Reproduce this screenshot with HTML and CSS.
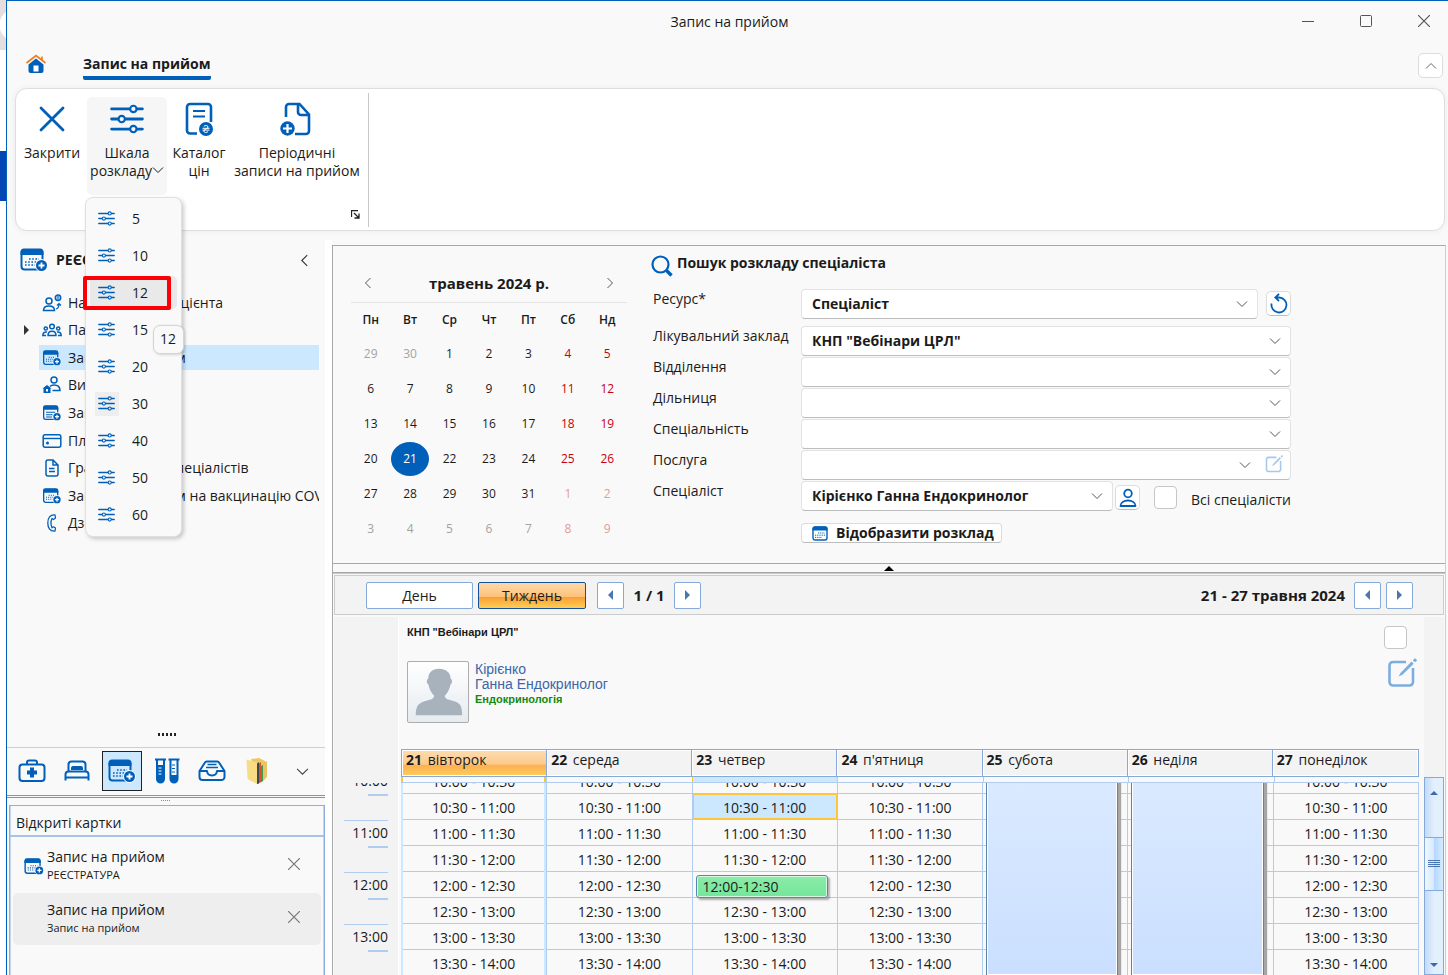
FILE: index.html
```html
<!DOCTYPE html>
<html lang="uk">
  <head>
    <meta charset="UTF-8" />
    <meta name="viewport" content="width=device-width, initial-scale=1.0" />
    <title>Запис на прийом</title>
    <link rel="stylesheet" href="styles.css">
  </head>
  <body>
    <!-- icons -->
    <svg class="icon-defs" aria-hidden="true">
      <symbol id="i-sliders" viewBox="0 0 32 32">
        <g fill="none" stroke="currentColor" stroke-width="2.6" stroke-linecap="round">
          <path d="M1.5 6.5h17M25.500 6.500h5M1.500 16h6M14.500 16h16M1.500 25.500h17M25.500 25.500h5" />
          <circle cx="22" cy="6.500" r="3" stroke-width="2" />
          <circle cx="11" cy="16" r="3" stroke-width="2" />
          <circle cx="22" cy="25.500" r="3" stroke-width="2" />
        </g>
      </symbol>
      <symbol id="i-down" viewBox="0 0 12 12">
        <path d="M1 3.500l5 5 5-5" fill="none" stroke="currentColor" />
      </symbol>
      <symbol id="i-up" viewBox="0 0 12 12">
        <path d="M1 8.500l5-5 5 5" fill="none" stroke="currentColor" />
      </symbol>
      <symbol id="i-left" viewBox="0 0 12 12">
        <path d="M8.500 1l-5 5 5 5" fill="none" stroke="currentColor" />
      </symbol>
      <symbol id="i-right" viewBox="0 0 12 12">
        <path d="M3.500 1l5 5-5 5" fill="none" stroke="currentColor" />
      </symbol>
      <symbol id="i-x" viewBox="0 0 12 12">
        <path d="M0 0l12 12M12 0l-12 12" fill="none" stroke="currentColor" stroke-width="1.200" />
      </symbol>
      <symbol id="i-calendar" viewBox="0 0 28 24">
        <rect x="1.500" y="2" width="21" height="19.500" rx="3" fill="none" stroke="currentColor" stroke-width="2" />
        <path d="M.5 7V4a3.500 3.500 0 0 1 3.500-3.500h16A3.500 3.500 0 0 1 23.500 4v3z" fill="currentColor" />
        <path d="M9 11h10M5 14h14M5 17h10" stroke="currentColor" stroke-width="1.600" stroke-dasharray="1.600 1.600" />
        <circle cx="21.500" cy="17.500" r="6.500" fill="#f9f9f9" />
        <circle cx="21.500" cy="17.500" r="5.500" fill="currentColor" />
        <path d="M18.500 17.500h6M21.500 14.500v6" stroke="#fff" stroke-width="1.800" />
      </symbol>
      <symbol id="i-list" viewBox="0 0 28 24">
        <rect x="1.500" y="2" width="21" height="19.500" rx="3" fill="none" stroke="currentColor" stroke-width="2" />
        <path d="M.5 7V4a3.500 3.500 0 0 1 3.500-3.500h16A3.500 3.500 0 0 1 23.500 4v3z" fill="currentColor" />
        <path d="M5 11h14M5 14.500h10M5 18h9" stroke="currentColor" stroke-width="1.600" />
        <circle cx="21.500" cy="17.500" r="6.500" fill="#f9f9f9" />
        <circle cx="21.500" cy="17.500" r="5.500" fill="currentColor" />
        <path d="M18.500 17.500h6M21.500 14.500v6" stroke="#fff" stroke-width="1.800" />
      </symbol>
      <symbol id="i-calendar-small" viewBox="0 0 16 15">
        <rect x="1" y="1" width="14" height="13" rx="2" fill="none" stroke="currentColor" stroke-width="1.400" />
        <path d="M.5 4.500V2.500a2 2 0 0 1 2-2h11a2 2 0 0 1 2 2v2z" fill="currentColor" />
        <path d="M6 7h7M3 9.200h10M3 11.400h7" stroke="currentColor" stroke-dasharray="1.200 1" />
      </symbol>
      <symbol id="i-referral" viewBox="0 0 20 18">
        <g fill="none" stroke="currentColor" stroke-width="1.500">
          <circle cx="7" cy="7" r="3" />
          <path d="M1.500 16.500c0-3 2.500-4.500 5.500-4.500s5.500 1.500 5.500 4.500z" />
          <path d="M14 15c2.500-.5 3-2 3-5M15 11.500L17 9.500l2 2" stroke-width="1.200" />
          <circle cx="16" cy="3.800" r="2.800" stroke-width="1.300" />
          <path d="M13.500 3h5M13.500 5h5M16 1.500v5" stroke-width=".7" />
        </g>
      </symbol>
      <symbol id="i-group" viewBox="0 0 20 14">
        <g fill="none" stroke="currentColor" stroke-width="1.500">
          <circle cx="10" cy="3.500" r="2.300" />
          <path d="M6 12.500c0-3 1.500-4.200 4-4.200s4 1.200 4 4.200z" />
          <circle cx="3.800" cy="5.500" r="1.600" />
          <circle cx="16.200" cy="5.500" r="1.600" />
          <path d="M5 9C2.500 8.500.8 10 .8 12.500H4M15 9c2.500-.5 4.200 1 4.200 3.500H16" />
        </g>
      </symbol>
      <symbol id="i-homecall" viewBox="0 0 20 18">
        <g fill="none" stroke="currentColor" stroke-width="1.500">
          <circle cx="12" cy="4" r="3" />
          <path d="M8 10.500c1-1.200 2.500-1.500 4-1.500 3.500 0 6 1.500 6 5.500H10.500" />
        </g>
        <path d="M.5 12.500L5 9l4.500 3.500H8.500V17h-7v-4.500z" fill="currentColor" />
        <rect x="4" y="13" width="2" height="2.500" fill="#fff" />
      </symbol>
      <symbol id="i-card" viewBox="0 0 20 16">
        <rect x="1.200" y="1.700" width="17.600" height="12.600" rx="2" fill="none" stroke="currentColor" stroke-width="1.500" />
        <path d="M1 5.500h18" stroke="currentColor" stroke-width="1.400" />
        <circle cx="5.500" cy="10" r="1.500" fill="currentColor" />
      </symbol>
      <symbol id="i-doc" viewBox="0 0 16 18">
        <path d="M2 3a2 2 0 0 1 2-2h5l5 5v9a2 2 0 0 1-2 2H4a2 2 0 0 1-2-2zM9 1v5h5M5 9.500h5.500M5 12.500h6" fill="none" stroke="currentColor" stroke-width="1.500" />
      </symbol>
      <symbol id="i-phone" viewBox="0 0 12 18">
        <path d="M9 1C4 .5 1.800 4 1.800 9S4 17.500 9 17l.5-3-2-1.200-1.500 1C4.800 11 4.800 7 6 4.500l1.500 1L9.500 4z" fill="none" stroke="currentColor" stroke-width="1.300" stroke-linejoin="round" />
      </symbol>
      <symbol id="i-edit" viewBox="0 0 30 30">
        <path d="M19 4H6a3.500 3.500 0 0 0-3.500 3.500V24A3.500 3.500 0 0 0 6 27.500h16.500A3.500 3.500 0 0 0 26 24V10" fill="none" stroke="currentColor" stroke-width="2.600" />
        <path d="M11.500 18.500l2-3.500L24.500 3.500l2.200 2.200L15.500 16.800z" fill="currentColor" />
        <circle cx="28" cy="2.300" r="1.700" fill="currentColor" />
      </symbol>
    </svg>

    <div class="screen">
      <div class="backdrop">
        <div class="backdrop-top"></div>
        <div class="backdrop-mark"></div>
      </div>

      <div class="window">
        <header class="titlebar">
          <h1>Запис на прийом</h1>
          <div class="window-buttons">
            <button type="button" aria-label="Згорнути">
              <svg width="12" height="12"><path d="M0 6.500h12" stroke="#555" /></svg>
            </button>
            <button type="button" aria-label="Розгорнути">
              <svg width="12" height="12"><rect x=".5" y=".5" width="11" height="11" rx="1" fill="none" stroke="#555" /></svg>
            </button>
            <button type="button" aria-label="Закрити вікно">
              <svg width="12" height="12"><use href="#i-x" /></svg>
            </button>
          </div>
        </header>

        <nav class="tabs">
          <a class="home" href="#" aria-label="Головна">
            <svg width="20" height="20" viewBox="0 0 20 20">
              <path d="M2.500 10.500L10 4.500l7.500 6V17a2 2 0 0 1-2 2h-11a2 2 0 0 1-2-2z" fill="#0060b9" />
              <rect x="7.500" y="11.500" width="5" height="6" fill="#fff" />
              <path d="M.5 9L10 1.500 19.500 9M16 6V2.500" fill="none" stroke="#f27a1a" stroke-width="1.600" />
            </svg>
          </a>
          <a class="tab" href="#">Запис на прийом</a>
          <button class="square collapse" type="button" aria-label="Згорнути стрічку">
            <svg width="12" height="12"><use href="#i-up" /></svg>
          </button>
        </nav>

        <section class="ribbon">
          <div class="ribbon-group">
            <button class="ribbon-button close" type="button">
              <svg width="34" height="34" viewBox="0 0 34 34"><path d="M6 6l22 22M28 6L6 28" stroke="currentColor" stroke-width="2.800" stroke-linecap="round" /></svg>
              <span>Закрити</span>
            </button>
            <div class="ribbon-drop">
              <button class="ribbon-button scale" type="button">
                <svg width="34" height="34"><use href="#i-sliders" /></svg>
                <span>Шкала<br />розкладу<svg class="caret" width="12" height="12"><use href="#i-down" /></svg></span>
              </button>
              <ul class="menu" id="scale-menu"></ul>
              <div class="tooltip">12</div>
            </div>
            <button class="ribbon-button catalog" type="button">
              <svg width="34" height="34" viewBox="0 0 34 34">
                <path d="M15 31.500H8A3 3 0 0 1 5 28.500V5a3 3 0 0 1 3-3h18a3 3 0 0 1 3 3v15" fill="none" stroke="currentColor" stroke-width="2.600" />
                <path d="M11 9h12M11 14.500h12" stroke="currentColor" stroke-width="2" />
                <circle cx="24" cy="27" r="7" fill="currentColor" />
                <path d="M21.800 24.500c1-1.500 4.200-1.300 4.200.5 0 2-4.200 2-4.200 4 0 1.800 3.200 2 4.200.5M20.500 26.300h7M20.500 28.100h7" fill="none" stroke="#fff" />
              </svg>
              <span>Каталог<br />цін</span>
            </button>
            <button class="ribbon-button periodic" type="button">
              <svg width="34" height="34" viewBox="0 0 34 34">
                <path d="M6 15V5a3 3 0 0 1 3-3h10.500L29 12.500V29a3 3 0 0 1-3 3H15M18 2.500V10a3 3 0 0 0 3 3h7.500" fill="none" stroke="currentColor" stroke-width="2.600" />
                <circle cx="7.500" cy="26.500" r="7.200" fill="currentColor" />
                <path d="M3 26.500h9M7.500 22v9" stroke="#fff" stroke-width="2.200" />
              </svg>
              <span>Періодичні<br />записи на прийом</span>
            </button>
            <button class="launcher" type="button" aria-label="Додатково">
              <svg width="9" height="9" viewBox="0 0 9 9"><path d="M.5 7V.5H7M3 3l4.500 4.500M8 3.500V8H3.500" fill="none" stroke="#222" stroke-width="1.300" /></svg>
            </button>
          </div>
        </section>

        <div class="workspace">
          <aside class="sidebar">
            <div class="side-head">
              <svg width="28" height="24"><use href="#i-calendar" /></svg>
              <h2>РЕЄСТРАТУРА</h2>
              <button type="button" aria-label="Сховати панель"><svg width="13" height="13"><use href="#i-left" /></svg></button>
            </div>
            <ul class="tree">
              <li><a href="#"><svg width="20" height="18"><use href="#i-referral" /></svg>Направлення пацієнта</a></li>
              <li class="branch"><a href="#"><svg width="20" height="14"><use href="#i-group" /></svg>Пацієнти</a></li>
              <li class="selected"><a href="#"><svg width="20" height="16"><use href="#i-calendar" /></svg>Запис на прийом</a></li>
              <li><a href="#"><svg width="20" height="18"><use href="#i-homecall" /></svg>Виклики</a></li>
              <li><a href="#"><svg width="20" height="16"><use href="#i-list" /></svg>Записи</a></li>
              <li><a href="#"><svg width="20" height="16"><use href="#i-card" /></svg>Платежі</a></li>
              <li><a href="#"><svg width="20" height="18"><use href="#i-doc" /></svg>Графік роботи спеціалістів</a></li>
              <li><a href="#"><svg width="20" height="16"><use href="#i-calendar" /></svg>Запис на прийом на вакцинацію COVID</a></li>
              <li><a href="#"><svg width="20" height="18"><use href="#i-phone" /></svg>Дзвінки</a></li>
            </ul>
            <div class="grip"></div>
            <div class="modules">
              <button type="button" aria-label="Лікар">
                <svg width="28" height="24" viewBox="0 0 28 24">
                  <rect x="1.500" y="5.500" width="25" height="16.500" rx="3" fill="none" stroke="currentColor" stroke-width="2" />
                  <path d="M9 5V3.500A2 2 0 0 1 11 1.500h6a2 2 0 0 1 2 2V5" fill="none" stroke="currentColor" stroke-width="2" />
                  <path d="M9 13.500h10M14 8.500v10" stroke="currentColor" stroke-width="4" />
                </svg>
              </button>
              <button type="button" aria-label="Стаціонар">
                <svg width="28" height="24" viewBox="0 0 28 24">
                  <path d="M2.500 21.500v-6a3 3 0 0 1 3-3h17a3 3 0 0 1 3 3v6M3 18.500h22M5.500 12V5.500a3 3 0 0 1 3-3h11a3 3 0 0 1 3 3V12" fill="none" stroke="currentColor" stroke-width="2" />
                  <path d="M8 11V9a2 2 0 0 1 2-2h8a2 2 0 0 1 2 2V11" fill="currentColor" />
                </svg>
              </button>
              <button class="active" type="button" aria-label="Реєстратура">
                <svg width="28" height="24"><use href="#i-calendar" /></svg>
              </button>
              <button type="button" aria-label="Лабораторія">
                <svg width="28" height="26" viewBox="0 0 28 26">
                  <path d="M2 1.500h11M15.500 1.500h11M4 2v19a3.500 3.500 0 0 0 7 0V2M17.500 2v19a3.500 3.500 0 0 0 7 0V2" fill="none" stroke="currentColor" stroke-width="2" />
                  <path d="M4 7h7v14a3.500 3.500 0 0 1-7 0zM17.500 17h7v4a3.500 3.500 0 0 1-7 0z" fill="currentColor" />
                  <path d="M5.500 10h3M5.500 13h3M5.500 16h3" stroke="#fff" />
                  <path d="M19 7h3M19 10.500h3M19 14h3" stroke="currentColor" />
                </svg>
              </button>
              <button type="button" aria-label="Архів">
                <svg width="28" height="24" viewBox="0 0 28 24">
                  <path d="M1.500 12L7 3.500A2 2 0 0 1 9 2.500h10a2 2 0 0 1 2 1l5.500 8.500v6a3 3 0 0 1-3 3h-19a3 3 0 0 1-3-3zM1.500 12H9c.5 6 9.500 6 10 0h7.500" fill="none" stroke="currentColor" stroke-width="2" stroke-linejoin="round" />
                  <path d="M9.500 5.500h9M8 8.500h12" stroke="currentColor" stroke-width="1.400" />
                </svg>
              </button>
              <button type="button" aria-label="Довідники">
                <svg width="28" height="28" viewBox="0 0 28 28">
                  <path d="M8 2l8-1 6 3v18l-7 5z" fill="#efc95e" />
                  <path d="M14 6.500l2-1.500V26.500l-2 .5z" fill="#3c4a55" />
                  <path d="M16 6.500l2-1.500v20l-2 1.300z" fill="#d8502e" />
                  <path d="M18 9l2-1v16l-2 1.200z" fill="#3f9c4a" />
                  <path d="M20 6l4-2v16l-4 4z" fill="#e9c464" />
                  <path d="M3.500 2.500L14 5.500V27L4.500 22z" fill="#f8dd85" />
                </svg>
              </button>
              <button class="more" type="button" aria-label="Ще"><svg width="13" height="13"><use href="#i-down" /></svg></button>
            </div>
            <div class="side-split"></div>
            <section class="opened">
              <h2>Відкриті картки</h2>
              <ul>
                <li>
                  <svg width="20" height="17"><use href="#i-calendar" /></svg>
                  <div><a href="#">Запис на прийом</a><small>РЕЄСТРАТУРА</small></div>
                  <button type="button" aria-label="Закрити картку"><svg width="12" height="12"><use href="#i-x" /></svg></button>
                </li>
                <li class="current">
                  <div><a href="#">Запис на прийом</a><small>Запис на прийом</small></div>
                  <button type="button" aria-label="Закрити картку"><svg width="12" height="12"><use href="#i-x" /></svg></button>
                </li>
              </ul>
            </section>
          </aside>

          <main class="content">
            <section class="search">
              <div class="calendar">
                <div class="calendar-head">
                  <button type="button" aria-label="Попередній місяць"><svg width="12" height="12"><use href="#i-left" /></svg></button>
                  <strong>травень 2024 р.</strong>
                  <button type="button" aria-label="Наступний місяць"><svg width="12" height="12"><use href="#i-right" /></svg></button>
                </div>
                <table>
                  <thead>
                    <tr><th>Пн</th><th>Вт</th><th>Ср</th><th>Чт</th><th>Пт</th><th>Сб</th><th>Нд</th></tr>
                  </thead>
                  <tbody id="calendar-days"></tbody>
                </table>
              </div>

              <form class="filters">
                <h2>
                  <svg width="22" height="22" viewBox="0 0 22 22"><circle cx="9.500" cy="9.500" r="8" fill="none" stroke="#0060b9" stroke-width="2.200" /><path d="M15.500 15.500l5 5" stroke="#0060b9" stroke-width="3.400" /></svg>
                  Пошук розкладу спеціаліста
                </h2>
                <div class="field first">
                  <label for="resource">Ресурс*</label>
                  <div class="combo"><select id="resource"><option>Спеціаліст</option></select><svg width="12" height="12"><use href="#i-down" /></svg></div>
                  <button class="square reset" type="button" aria-label="Скинути">
                    <svg width="20" height="22" viewBox="0 0 20 22"><path d="M2.600 10.500a7.500 7.500 0 1 0 7.400-6H6.500M10 .8L6.300 4.500 10 8.200" fill="none" stroke="#0060b9" stroke-width="1.800" /></svg>
                  </button>
                </div>
                <div class="field">
                  <label for="clinic">Лікувальний заклад</label>
                  <div class="combo"><select id="clinic"><option>КНП "Вебінари ЦРЛ"</option></select><svg width="12" height="12"><use href="#i-down" /></svg></div>
                </div>
                <div class="field">
                  <label for="department">Відділення</label>
                  <div class="combo"><select id="department"><option></option></select><svg width="12" height="12"><use href="#i-down" /></svg></div>
                </div>
                <div class="field">
                  <label for="area">Дільниця</label>
                  <div class="combo"><select id="area"><option></option></select><svg width="12" height="12"><use href="#i-down" /></svg></div>
                </div>
                <div class="field">
                  <label for="speciality">Спеціальність</label>
                  <div class="combo"><select id="speciality"><option></option></select><svg width="12" height="12"><use href="#i-down" /></svg></div>
                </div>
                <div class="field">
                  <label for="service">Послуга</label>
                  <div class="combo with-edit">
                    <select id="service"><option></option></select><svg width="12" height="12"><use href="#i-down" /></svg>
                    <button class="edit" type="button" aria-label="Редагувати послугу"><svg width="18" height="18"><use href="#i-edit" /></svg></button>
                  </div>
                </div>
                <div class="field">
                  <label for="doctor">Спеціаліст</label>
                  <div class="combo"><select id="doctor"><option>Кірієнко Ганна Ендокринолог</option></select><svg width="12" height="12"><use href="#i-down" /></svg></div>
                  <button class="square person" type="button" aria-label="Картка спеціаліста">
                    <svg width="18" height="20" viewBox="0 0 18 20"><circle cx="9" cy="5.500" r="3.800" fill="none" stroke="#0060b9" stroke-width="1.800" /><path d="M1.500 18c0-3.500 3.500-5.500 7.500-5.500s7.500 2 7.500 5.500z" fill="none" stroke="#0060b9" stroke-width="1.800" stroke-linejoin="round" /></svg>
                  </button>
                  <input class="box" type="checkbox" id="all-doctors" />
                  <label class="check-label" for="all-doctors">Всі спеціалісти</label>
                </div>
                <button class="show" type="submit"><svg width="16" height="15"><use href="#i-calendar-small" /></svg>Відобразити розклад</button>
              </form>
            </section>

            <div class="splitter"></div>

            <section class="schedule">
              <div class="toolbar">
                <button class="mode" type="button">День</button>
                <button class="mode on" type="button">Тиждень</button>
                <button class="arrow prev" type="button" aria-label="Попередня сторінка"></button>
                <strong class="page">1 / 1</strong>
                <button class="arrow next" type="button" aria-label="Наступна сторінка"></button>
                <strong class="range">21 - 27 травня 2024</strong>
                <button class="arrow prev" type="button" aria-label="Попередній тиждень"></button>
                <button class="arrow next" type="button" aria-label="Наступний тиждень"></button>
              </div>

              <div class="board">
                <div class="hours"><div class="hours-clip" id="hours"></div></div>
                <div class="week">
                  <div class="doctor">
                    <div class="doctor-info">
                      <strong>КНП "Вебінари ЦРЛ"</strong>
                      <div class="doctor-card">
                        <svg class="photo" width="62" height="62" viewBox="0 0 62 62">
                          <path d="M8 55c0-10 3-13 11-15 5-1 8-2 8-5-3-3-5-7-6-12-2-1-2-5 0-6 0-6 4-10 11-10s12 4 12 10c2 1 2 5 0 6-1 5-3 9-6 12 0 3 3 4 8 5 8 2 10 5 10 15z" fill="#a8b2bc" />
                        </svg>
                        <div>
                          <a href="#">Кірієнко<br />Ганна Ендокринолог</a>
                          <b>Ендокринологія</b>
                        </div>
                      </div>
                    </div>
                    <div class="doctor-tools">
                      <input class="box" type="checkbox" aria-label="Вибрати спеціаліста" />
                      <button type="button" aria-label="Редагувати розклад"><svg width="30" height="30"><use href="#i-edit" /></svg></button>
                    </div>
                  </div>
                  <div class="days" id="days"></div>
                  <div class="allday">
                    <div class="today"></div><div></div><div class="picked"></div><div></div><div></div><div></div><div></div>
                  </div>
                  <div class="slots" id="slots"></div>
                </div>
                <div class="scroll">
                  <div class="track">
                    <i class="up"></i>
                    <div class="thumb"></div>
                    <i class="down"></i>
                  </div>
                </div>
              </div>
            </section>
          </main>
        </div>
      </div>
    </div>

    <script type="text/javascript">
      // scale menu
      var menu = document.getElementById("scale-menu");
      [5, 10, 12, 15, 20, 30, 40, 50, 60].forEach(function (n) {
        var li = document.createElement("li");
        if (n == 12) li.className = "hover";
        if (n == 30) li.className = "checked";
        li.innerHTML = `<button type="button"><span class="mark"><svg width="17" height="17"><use href="#i-sliders" /></svg></span>${n}</button>`;
        menu.append(li);
      });

      // month grid starts on 29 April
      var body = document.getElementById("calendar-days");
      var date = new Date(2024, 3, 29);
      for (let w = 0; w < 6; w++) {
        var tr = document.createElement("tr");
        for (let d = 0; d < 7; d++) {
          var td = document.createElement("td");
          if (d > 4) td.classList.add("weekend");
          if (date.getMonth() != 4) td.classList.add("other");
          else if (date.getDate() == 21) td.classList.add("today");
          td.innerHTML = `<span>${date.getDate()}</span>`;
          tr.append(td);
          date.setDate(date.getDate() + 1);
        }
        body.append(tr);
      }

      // week
      var names = ["вівторок", "середа", "четвер", "п'ятниця", "субота", "неділя", "понеділок"];
      var times = ["10:00", "10:30", "11:00", "11:30", "12:00", "12:30", "13:00", "13:30", "14:00"];
      var days = document.getElementById("days");
      var slots = document.getElementById("slots");
      names.forEach(function (name, i) {
        var head = document.createElement("div");
        head.className = i == 0 ? "day today" : "day";
        head.innerHTML = `<b>${21 + i}</b> ${name}`;
        days.append(head);

        var col = document.createElement("div");
        col.className = i == 0 ? "column today" : "column";
        for (let t = 0; t < times.length - 1; t++) {
          var slot = document.createElement("div");
          slot.className = i == 2 && t == 1 ? "slot picked" : "slot";
          if (i != 4 && i != 5) slot.textContent = times[t] + " - " + times[t + 1];
          if (i == 2 && t == 4) slot.innerHTML = '<div class="visit">12:00-12:30</div>';
          col.append(slot);
        }
        if (i == 4 || i == 5) col.insertAdjacentHTML("beforeend", '<div class="closed"></div>');
        slots.append(col);
      });

      var hours = document.getElementById("hours");
      ["10:00", "11:00", "12:00", "13:00"].forEach(function (h) {
        hours.insertAdjacentHTML("beforeend", `<div class="hour"><span>${h}</span></div>`);
      });
    </script>
  </body>
</html>
```
FILE: styles.css
```css
*,
*::before,
*::after {
  box-sizing: border-box;
}
body {
  margin: 0;
  color: #1b1b1b;
  background-color: white;
  font-family: "Open Sans", "Noto Sans", sans-serif;
  font-size: 14px;
  line-height: 18px;
}
button,
select,
input {
  font: inherit;
  color: inherit;
  margin: 0;
}
button {
  border: none;
  background: none;
  padding: 0;
}
a {
  color: inherit;
  text-decoration: none;
}
ul {
  list-style: none;
  margin: 0;
  padding: 0;
}
h1,
h2 {
  margin: 0;
  font-size: 14px;
}
svg {
  display: block;
  flex: none;
}
.icon-defs {
  display: none;
}
.screen {
  display: flex;
  height: 100vh;
  overflow: hidden;
}

/* strip of the desktop behind the window */
.backdrop {
  width: 6px;
  flex: none;
}
.backdrop-top {
  height: 50px;
  background: radial-gradient(circle at 16px 25px, white 16px, #e6dede 17px);
}
.backdrop-mark {
  height: 50px;
  margin-top: 101px;
  background-color: #0046b4;
}
.window {
  flex: 1;
  min-width: 0;
  display: flex;
  flex-direction: column;
  border-top: 1px solid #0060b9;
  border-left: 1px solid #0060b9;
  background-color: #f9f9f9;
}

/* title */
.titlebar {
  position: relative;
  display: flex;
  align-items: center;
  justify-content: center;
  height: 42px;
  flex: none;
  padding-left: 4px;
}
.titlebar h1 {
  font-weight: 400;
}
.window-buttons {
  position: absolute;
  right: 18px;
  top: 14px;
  display: flex;
  gap: 46px;
  color: #555;
}
.tabs {
  display: flex;
  align-items: center;
  height: 45px;
  flex: none;
  padding: 0 5px 0 19px;
}
.home {
  margin-bottom: 3px;
}
.tab {
  margin-left: 37px;
  padding: 4px 0 3px;
  font-weight: 700;
  border-bottom: 4px solid #0060b9;
  border-radius: 2px;
}
.square {
  display: flex;
  align-items: center;
  justify-content: center;
  width: 25px;
  height: 25px;
  flex: none;
  border: 1px solid #dcdcdc;
  border-radius: 5px;
  background-color: white;
}
.collapse {
  margin-left: auto;
  color: #666;
}

/* ribbon */
.ribbon {
  height: 143px;
  flex: none;
  margin: 0 3px 0 8px;
  padding: 4px 0 4px 1px;
  border: 1px solid #dedede;
  border-radius: 12px;
  background-color: white;
  box-shadow: 0 0 6px rgba(0, 0, 0, 0.06);
}
.ribbon-group {
  position: relative;
  display: flex;
  align-items: flex-start;
  width: 352px;
  height: 134px;
  padding-top: 4px;
  border-right: 1px solid #c8c8c8;
}
.ribbon-button {
  display: flex;
  flex-direction: column;
  align-items: center;
  gap: 8px;
  height: 98px;
  padding-top: 5px;
  border-radius: 5px;
}
.ribbon-button > svg {
  color: #0060b9;
}
.close {
  width: 70px;
}
.scale {
  width: 80px;
  background-color: #f6f6f6;
}
.scale span {
  white-space: nowrap;
}
.catalog {
  width: 64px;
}
.periodic {
  width: 132px;
  white-space: nowrap;
}
.caret {
  display: inline-block;
}
.launcher {
  position: absolute;
  right: 8px;
  bottom: 8px;
}
.ribbon-drop {
  position: relative;
}
.menu {
  position: absolute;
  z-index: 2;
  top: 100px;
  left: -2px;
  width: 97px;
  padding: 2px 4px 3px;
  border: 1px solid #e0e0e0;
  border-radius: 8px;
  background-color: #f9f9f9;
  box-shadow: 2px 2px 4px rgba(0, 0, 0, 0.2);
}
.menu button {
  display: flex;
  align-items: center;
  gap: 13px;
  width: 100%;
  height: 33px;
  margin: 2px 0;
  padding-left: 5px;
  border-radius: 5px;
}
.menu li {
  display: flow-root;
  height: 37px;
}
.mark {
  padding: 3px 4px 4px 3px;
  color: #0060b9;
}
.menu .hover {
  position: relative;
}
.menu .hover button {
  background-color: #e9e9e9;
}
.menu .hover::after {
  content: "";
  position: absolute;
  top: 2px;
  left: -7px;
  width: 88px;
  height: 34px;
  border: 4px solid #fb0007;
  border-radius: 2px;
}
.menu .checked .mark {
  background-color: #eeeeee;
}
.tooltip {
  position: absolute;
  z-index: 3;
  top: 228px;
  left: 66px;
  padding: 4px 7px 5px 6px;
  border: 1px solid #d4d4d4;
  border-radius: 7px;
  background-color: #f9f9f9;
  box-shadow: 1px 1px 3px rgba(0, 0, 0, 0.15);
}

.workspace {
  flex: 1;
  min-height: 0;
  display: flex;
  padding-top: 9px;
}

/* sidebar */
.sidebar {
  display: flex;
  flex-direction: column;
  width: 325px;
  flex: none;
  border-right: 7px solid white;
}
.side-head {
  display: flex;
  align-items: center;
  height: 40px;
  flex: none;
  padding: 0 14px 0 13px;
}
.side-head svg {
  color: #0060b9;
}
.side-head h2 {
  flex: 1;
  margin-left: 8px;
}
.side-head button svg {
  color: #333;
}
.tree {
  display: flex;
  flex-direction: column;
  height: 248px;
  flex: none;
  margin: 9px 6px 0 32px;
}
.tree li {
  position: relative;
  flex: 1;
  display: flex;
  align-items: center;
}
.tree a {
  display: flex;
  align-items: center;
  gap: 6px;
  flex: 1;
  height: 25px;
  padding-left: 3px;
  overflow: hidden;
  white-space: nowrap;
}
.tree svg {
  color: #0060b9;
}
.tree .selected a {
  background-color: #cce8ff;
}
.tree .branch::before {
  content: "";
  position: absolute;
  left: -15px;
  border: 5px solid transparent;
  border-left-color: #333;
  border-right: none;
}
.grip {
  width: 18px;
  height: 3px;
  margin: auto auto 11px 151px;
  background-image: repeating-linear-gradient(90deg, #222 0 2px, transparent 2px 4px);
}
.modules {
  display: flex;
  align-items: center;
  gap: 5px;
  height: 48px;
  flex: none;
  padding: 0 0 1px 5px;
  border-top: 1px solid #cfcfcf;
  color: #0060b9;
}
.modules button {
  display: flex;
  align-items: center;
  justify-content: center;
  width: 40px;
  height: 40px;
  flex: none;
}
.modules .active {
  border: 1px solid #222;
  background-color: #cce8ff;
}
.modules .more {
  color: #444;
}
.side-split {
  display: flex;
  justify-content: center;
  height: 10px;
  flex: none;
  border-top: 3px double #7095cf;
}
.side-split::after {
  content: "";
  width: 10px;
  height: 1px;
  margin-top: 2px;
  background-image: repeating-linear-gradient(90deg, #6a92cf 0 1px, transparent 1px 2px);
}
.opened {
  height: 170px;
  flex: none;
  margin-left: 2px;
  border: 1px solid #8fb0dd;
  border-bottom: none;
  box-shadow: inset 1px 0 #c3d4ec, inset -1px 0 #c3d4ec;
}
.opened h2 {
  height: 31px;
  padding: 8px 6px 0;
  font-weight: 400;
  border-bottom: 2px solid #a9c3e6;
}
.opened ul {
  padding: 3px;
}
.opened li {
  display: flex;
  align-items: center;
  height: 52px;
  margin-bottom: 1px;
  padding: 0 21px 0 11px;
  border-radius: 5px;
}
.opened li > svg {
  color: #0060b9;
}
.opened div {
  flex: 1;
  margin-left: 3px;
}
.opened small {
  display: block;
  font-size: 11px;
}
.opened button {
  margin-bottom: 4px;
  color: #777;
}
.opened .current {
  padding-left: 31px;
  background-color: #eeeeee;
}

/* search */
.content {
  flex: 1;
  min-width: 0;
  display: flex;
  flex-direction: column;
  margin: 5px 2px 0 0;
  border-top: 1px solid #a8a8a8;
  border-left: 1px solid #a8a8a8;
  border-right: 1px solid #cfcfcf;
}
.search {
  display: flex;
  height: 317px;
  flex: none;
}
.calendar {
  width: 276px;
  flex: none;
  margin: 18px 24px 0 18px;
}
.calendar-head {
  display: flex;
  align-items: center;
  justify-content: space-between;
  height: 39px;
  padding: 0 11px;
  font-size: 15px;
  border-bottom: 1px solid #e4e4e4;
}
.calendar-head button {
  color: #555;
}
.calendar table {
  width: 100%;
  table-layout: fixed;
  border-collapse: collapse;
  font-size: 12px;
  text-align: center;
}
.calendar th {
  height: 33px;
  padding: 0;
  font-weight: 600;
}
.calendar td {
  height: 35px;
  padding: 0;
}
.calendar td span {
  display: block;
  width: 38px;
  margin: auto;
  line-height: 34px;
}
.calendar .weekend {
  color: #c80010;
}
.calendar .other {
  color: #a3a3a3;
}
.calendar .weekend.other {
  color: #e29a9f;
}
.calendar .today span {
  color: white;
  border-radius: 50%;
  background-color: #0060b9;
}
.filters {
  width: 640px;
  padding: 8px 0 0;
}
.filters h2 {
  display: flex;
  gap: 4px;
  height: 35px;
}
.filters h2 svg {
  margin: 1px 0 0;
}
.field {
  display: flex;
  height: 30px;
  margin-bottom: 1px;
  padding-left: 2px;
}
.field.first {
  margin-bottom: 7px;
}
.field label {
  width: 148px;
  flex: none;
  line-height: 20px;
}
.combo {
  position: relative;
  flex: 1;
}
.combo select {
  appearance: none;
  width: 100%;
  height: 30px;
  padding: 0 30px 0 10px;
  font-weight: 700;
  border: 1px solid #e2e2e2;
  border-bottom-color: #bdbdbd;
  border-radius: 4px;
  background-color: white;
}
.combo > svg {
  position: absolute;
  top: 9px;
  right: 10px;
  color: #555;
  pointer-events: none;
}
.combo.with-edit > svg {
  right: 40px;
}
.edit {
  position: absolute;
  top: 5px;
  right: 8px;
  color: #a6c8ea;
}
.reset,
.person {
  border-bottom-color: #bdbdbd;
}
.reset {
  margin: 2px 0 0 8px;
}
.person {
  margin: 4px 0 0 2px;
}
.box {
  appearance: none;
  width: 23px;
  height: 23px;
  border: 1px solid #c6c6c6;
  border-radius: 4px;
  background-color: white;
}
.field .box {
  margin: 5px 14px 0 14px;
}
.field .check-label {
  width: 100px;
  margin-top: 9px;
  text-align: right;
  white-space: nowrap;
}
.show {
  display: flex;
  align-items: center;
  gap: 8px;
  height: 20px;
  margin: 12px 0 0 150px;
  padding: 0 7px 0 10px;
  font-weight: 700;
  border: 1px solid #dcdcdc;
  border-bottom-color: #bdbdbd;
  border-radius: 4px;
  background-color: white;
}
.show svg {
  color: #0060b9;
}
.splitter {
  display: flex;
  justify-content: center;
  height: 10px;
  flex: none;
  border: 1px solid #a8a8a8;
  border-width: 1px 0;
}
.splitter::after {
  content: "";
  height: 0;
  margin-top: 2px;
  border: 5px solid transparent;
  border-bottom-color: black;
  border-top: none;
}

/* schedule */
.schedule {
  flex: 1;
  min-height: 0;
  display: flex;
  flex-direction: column;
  padding: 1px 1px 0;
  border-top: 1px solid #b0cdf0;
}
.toolbar {
  display: flex;
  align-items: center;
  height: 40px;
  flex: none;
  padding: 0 30px 0 31px;
  border: 1px solid #cccccc;
  background-color: #f3f3f3;
}
.mode,
.arrow {
  height: 27px;
  border: 1px solid #86a9dc;
  border-radius: 2px;
  background-color: white;
}
.mode {
  width: 107px;
  margin-right: 5px;
  padding-top: 2px;
}
.mode.on {
  width: 108px;
  margin-right: 11px;
  border-color: #16509c;
  background-image: linear-gradient(#fdd9a8, #fdc27a 55%, #fb9d33 56%, #ffcf55);
}
.arrow {
  display: flex;
  align-items: center;
  justify-content: center;
  width: 27px;
}
.arrow::before {
  content: "";
  border: 5px solid transparent;
}
.prev::before {
  border-right-color: #4a77b4;
  border-left: none;
}
.next::before {
  border-left-color: #4a77b4;
  border-right: none;
}
.page,
.range {
  font-size: 15px;
}
.page {
  width: 50px;
  text-align: center;
}
.range {
  margin: 0 9px 0 auto;
}
.arrow + .arrow {
  margin-left: 5px;
}
.board {
  flex: 1;
  min-height: 0;
  display: flex;
  margin-top: 2px;
}
.hours {
  width: 64px;
  flex: none;
  padding-top: 166px;
  overflow: hidden;
  background-color: #f3f3f3;
}
.hours-clip {
  height: 193px;
  padding-left: 10px;
  overflow: hidden;
}
.hour {
  position: relative;
  width: 44px;
  height: 52px;
  padding-top: 3px;
  text-align: right;
  border-top: 1px solid #b0cdf0;
}
.hour:first-child {
  margin-top: -15px;
}
.hour::after {
  content: "";
  position: absolute;
  top: 25px;
  right: 0;
  width: 20px;
  border-top: 2px solid #b0cdf0;
}
.week {
  flex: 1;
  min-width: 0;
  display: flex;
  flex-direction: column;
  padding: 0 5px 0 2px;
  border-left: 1px solid white;
}
.doctor {
  display: flex;
  justify-content: space-between;
  height: 132px;
  flex: none;
  padding: 9px 0 0 6px;
  font-family: "Liberation Sans", Arial, sans-serif;
}
.doctor-info strong {
  display: block;
  font-size: 11px;
  line-height: 12px;
}
.doctor-card {
  display: flex;
  gap: 6px;
  margin-top: 23px;
  line-height: 15px;
}
.photo {
  border: 1px solid #adadad;
  border-radius: 2px;
  background-image: linear-gradient(white, #e6ebf0);
}
.doctor-card a {
  display: block;
  margin-top: 1px;
  color: #3c66a8;
}
.doctor-card b {
  display: block;
  color: #128a12;
  font-size: 11px;
}
.doctor-tools {
  width: 35px;
}
.doctor-tools .box {
  display: block;
}
.doctor-tools button {
  margin: 9px 0 0 3px;
  color: #7dade0;
}
.days,
.allday,
.slots {
  display: grid;
  grid-template-columns: repeat(7, minmax(0, 1fr));
  flex: none;
}
.days {
  height: 28px;
  border: 1px solid #86a9dc;
}
.day {
  padding: 0 3px;
  white-space: nowrap;
  border: 1px solid white;
  background-color: #f3f3f3;
}
.day b {
  margin-right: 2px;
}
.day + .day {
  box-shadow: -1px 0 #86a9dc;
}
.day.today {
  background-image: linear-gradient(#fddcae, #fdc98a 55%, #fdb151 60%, #ffc95a);
}
.allday {
  height: 5px;
}
.allday div {
  border-left: 1px solid #b0cdf0;
}
.allday .today {
  border-left: 2px solid #fcc53a;
  border-right: 2px solid #fcc53a;
}
.allday .picked {
  border-left-color: #fcc53a;
  background-color: #cce8ff;
}
.slots {
  height: 193px;
  overflow: hidden;
  border-top: 1px solid #b0cdf0;
  border-right: 1px solid #b0cdf0;
}
.column {
  position: relative;
  margin-top: -15px;
  border-left: 1px solid #b0cdf0;
}
.column.today {
  border-left: 2px solid #cce8ff;
  border-right: 2px solid #cce8ff;
}
.slot {
  height: 26px;
  padding-top: 5px;
  text-align: center;
  border-bottom: 1px solid #b0cdf0;
}
.slot.picked {
  background-color: #cce8ff;
  box-shadow: inset 0 0 0 1px #fcc53a;
}
.visit {
  position: relative;
  width: 132px;
  height: 23px;
  margin: -2px 0 0 3px;
  padding: 2px 6px;
  text-align: left;
  border: 1px solid #5b83b0;
  border-radius: 3px;
  background-image: linear-gradient(#8ceba6, #74e69c);
  box-shadow: inset 0 0 0 1px #d8f8e2, 2px 2px 2px rgba(0, 0, 0, 0.3);
}
.closed {
  position: absolute;
  inset: 0 9px 0 3px;
  border: 1px solid #5b83b0;
  background-image: linear-gradient(#dbeaff, #cadfff);
  box-shadow: inset 0 0 0 1px white, 3px 0 1px #a6a6a6;
}
.scroll {
  width: 20px;
  flex: none;
  padding-top: 160px;
  background-color: #f3f3f3;
}
.track {
  display: flex;
  flex-direction: column;
  align-items: center;
  height: 198px;
  padding: 13px 0 7px;
  border: 1px solid #86a9dc;
  background-image: linear-gradient(90deg, #c3dafa, #e2effd 50%);
}
.track i {
  border: 4px solid transparent;
}
.track .up {
  border-bottom-color: #3a69ae;
  border-top: none;
}
.track .down {
  margin-top: auto;
  border-top-color: #3a69ae;
  border-bottom: none;
}
.thumb {
  display: flex;
  align-items: center;
  justify-content: center;
  width: 100%;
  height: 54px;
  margin-top: 42px;
  border: 1px solid #86a9dc;
  border-width: 1px 0;
  background-image: linear-gradient(90deg, #f2f8ff, #d5e8ff 50%, #b4d8fc 51%, #d6ebff);
}
.thumb::after {
  content: "";
  width: 12px;
  height: 8px;
  background-image: repeating-linear-gradient(#4a77b4 0 1px, transparent 1px 2px);
}
```
